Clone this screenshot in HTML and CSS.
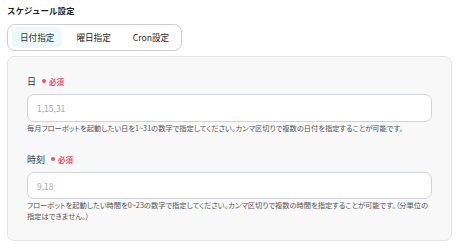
FILE: index.html
```html
<!DOCTYPE html>
<html lang="ja">
<head>
<meta charset="utf-8">
<link rel="stylesheet" href="styles.css">
</head>
<body>
<div class="page">
  <div class="title">スケジュール設定</div>
  <div class="tabs">
    <div class="tab active">日付指定</div>
    <div class="tab">曜日指定</div>
    <div class="tab">Cron設定</div>
  </div>
  <div class="panel">
    <div class="field">
      <div class="label">日<span class="req"><span class="dot"></span>必須</span></div>
      <div class="input">1,15,31</div>
      <div class="help">毎月フローボットを起動したい日を1~31の数字で指定してください。カンマ区切りで複数の日付を指定することが可能です。</div>
    </div>
    <div class="field second">
      <div class="label">時刻<span class="req"><span class="dot"></span>必須</span></div>
      <div class="input short">9,18</div>
      <div class="help">フローボットを起動したい時間を0~23の数字で指定してください。カンマ区切りで複数の時間を指定することが可能です。（分単位の指定はできません。）</div>
    </div>
  </div>
</div>
</body>
</html>
```
FILE: styles.css
```css
* { box-sizing: border-box; }
html, body { margin: 0; padding: 0; background: #fff; }
body {
  font-family: "Noto Sans CJK JP", "Noto Sans", sans-serif;
  color: #222;
  width: 460px;
  height: 250px;
  overflow: hidden;
}
.page { padding: 3px 8px 0 7px; }
.title {
  font-size: 8.5px;
  font-weight: 700;
  line-height: 14px;
  margin-bottom: 5px;
  color: #1f1f1f;
}
.tabs {
  display: inline-flex;
  gap: 6px;
  border: 1px solid #cfcfcf;
  border-radius: 8px;
  padding: 2px 4px;
}
.tab {
  height: 21px;
  line-height: 21px;
  padding: 0 8px;
  font-size: 8.6px;
  border-radius: 6px;
  color: #1f1f1f;
}
.tab.active {
  background: #eef8f9;
  color: #25384a;
}
.panel {
  margin-top: 5px;
  border: 1px solid #e3e3e3;
  border-radius: 7px;
  background: #f8f8f8;
  padding: 18px 19px 18px 19px;
}
.label {
  display: flex;
  align-items: center;
  height: 12px;
  font-size: 9px;
  color: #333;
  margin-bottom: 7px;
}
.req {
  display: inline-flex;
  align-items: center;
  margin-left: 6px;
  font-size: 7.5px;
  color: #f0506e;
  font-weight: 700;
}
.dot {
  width: 4px;
  height: 4px;
  border-radius: 50%;
  background: #f0506e;
  margin-right: 3px;
}
.input {
  height: 28px;
  border: 1px solid #cfd3da;
  border-radius: 7px;
  background: #fff;
  padding-left: 9px;
  display: flex;
  align-items: center;
  font-size: 8.5px;
  color: #a8a8a8;
}
.input.short { height: 27px; }
.help {
  margin-top: 1px;
  font-size: 7.25px;
  line-height: 11px;
  color: #555;
  font-feature-settings: "palt";
}
.second { margin-top: 19px; }
```
